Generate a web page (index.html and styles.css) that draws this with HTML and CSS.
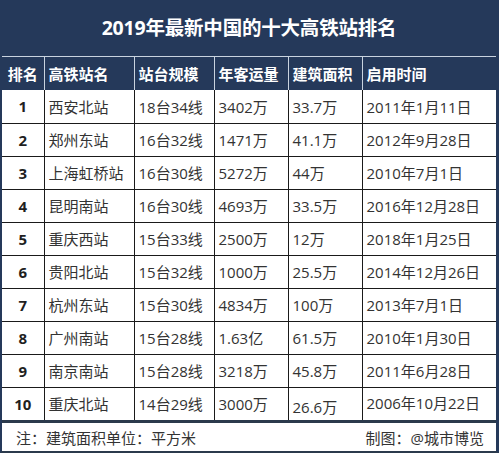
FILE: index.html
```html
<!DOCTYPE html>
<html lang="zh">
<head>
<meta charset="utf-8">
<title>2019年最新中国的十大高铁站排名</title>
<link rel="stylesheet" href="styles.css">
</head>
<body>
<div class="frame">
  <div class="title">2019年最新中国的十大高铁站排名</div>
  <table class="rank">
    <colgroup>
      <col class="c1"><col class="c2"><col class="c3"><col class="c4"><col class="c5"><col class="c6">
    </colgroup>
    <thead>
      <tr><th>排名</th><th>高铁站名</th><th>站台规模</th><th>年客运量</th><th>建筑面积</th><th>启用时间</th></tr>
    </thead>
    <tbody>
      <tr><td class="num">1</td><td>西安北站</td><td>18台34线</td><td>3402万</td><td>33.7万</td><td>2011年1月11日</td></tr>
      <tr><td class="num">2</td><td>郑州东站</td><td>16台32线</td><td>1471万</td><td>41.1万</td><td>2012年9月28日</td></tr>
      <tr><td class="num">3</td><td>上海虹桥站</td><td>16台30线</td><td>5272万</td><td>44万</td><td>2010年7月1日</td></tr>
      <tr><td class="num">4</td><td>昆明南站</td><td>16台30线</td><td>4693万</td><td>33.5万</td><td>2016年12月28日</td></tr>
      <tr><td class="num">5</td><td>重庆西站</td><td>15台33线</td><td>2500万</td><td>12万</td><td>2018年1月25日</td></tr>
      <tr><td class="num">6</td><td>贵阳北站</td><td>15台32线</td><td>1000万</td><td>25.5万</td><td>2014年12月26日</td></tr>
      <tr><td class="num">7</td><td>杭州东站</td><td>15台30线</td><td>4834万</td><td>100万</td><td>2013年7月1日</td></tr>
      <tr><td class="num">8</td><td>广州南站</td><td>15台28线</td><td>1.63亿</td><td>61.5万</td><td>2010年1月30日</td></tr>
      <tr><td class="num">9</td><td>南京南站</td><td>15台28线</td><td>3218万</td><td>45.8万</td><td>2011年6月28日</td></tr>
      <tr><td class="num">10</td><td>重庆北站</td><td>14台29线</td><td>3000万</td><td class="low">26.6万</td><td class="high">2006年10月22日</td></tr>
    </tbody>
  </table>
  <div class="foot">
    <span>注：建筑面积单位：平方米</span>
    <span>制图：@城市博览</span>
  </div>
</div>
</body>
</html>
```

FILE: styles.css
```css
html, body {
  margin: 0;
  padding: 0;
  background: #ffffff;
}
body {
  font-family: "Open Sans", "Noto Sans CJK SC", sans-serif;
  width: 499px;
  height: 459px;
  overflow: hidden;
}
.frame {
  width: 499px;
  box-sizing: border-box;
  border-left: 2px solid #25395a;
  border-right: 3px solid #25395a;
  border-bottom: 2px solid #2b3a4c;
  background: #ffffff;
}
.title {
  height: 56px;
  background: #25395a;
  color: #ffffff;
  font-weight: bold;
  font-size: 19.5px;
  line-height: 56px;
  text-align: center;
  border-bottom: 1px solid #c9d3df;
  letter-spacing: -0.2px;
}
.rank {
  width: 494px;
  border-collapse: collapse;
  table-layout: fixed;
}
.c1 { width: 42px; }
.c2 { width: 90px; }
.c3 { width: 80px; }
.c4 { width: 74px; }
.c5 { width: 74px; }
.c6 { width: 134px; }
.rank th {
  background: #25395a;
  color: #ffffff;
  font-weight: bold;
  font-size: 15px;
  height: 33px;
  padding: 0 0 0 4px;
  text-align: left;
  border-left: 1px solid #c9d3df;
  box-sizing: border-box;
}
.rank th:first-child {
  border-left: none;
  text-align: center;
  padding: 0;
}
.rank td {
  height: 33px;
  box-sizing: border-box;
  padding: 0 0 0 4px;
  font-size: 15px;
  color: #333333;
  border-left: 1px solid #1a1a1a;
  border-top: 1px solid #1a1a1a;
  white-space: nowrap;
}
.rank td:first-child {
  border-left: none;
}
.rank td.num {
  text-align: center;
  font-weight: bold;
  color: #1f1f1f;
  padding: 0;
}
.rank td.low {
  padding-top: 6px;
}
.rank td.high {
  padding-bottom: 3px;
}
.rank tbody tr:first-child td {
  border-top: none;
}
.foot {
  border-top: 3px solid #2b3a4c;
  height: 28px;
  display: flex;
  align-items: center;
  justify-content: space-between;
  padding: 0 12px 0 14px;
  font-size: 15px;
  color: #333333;
}
```
